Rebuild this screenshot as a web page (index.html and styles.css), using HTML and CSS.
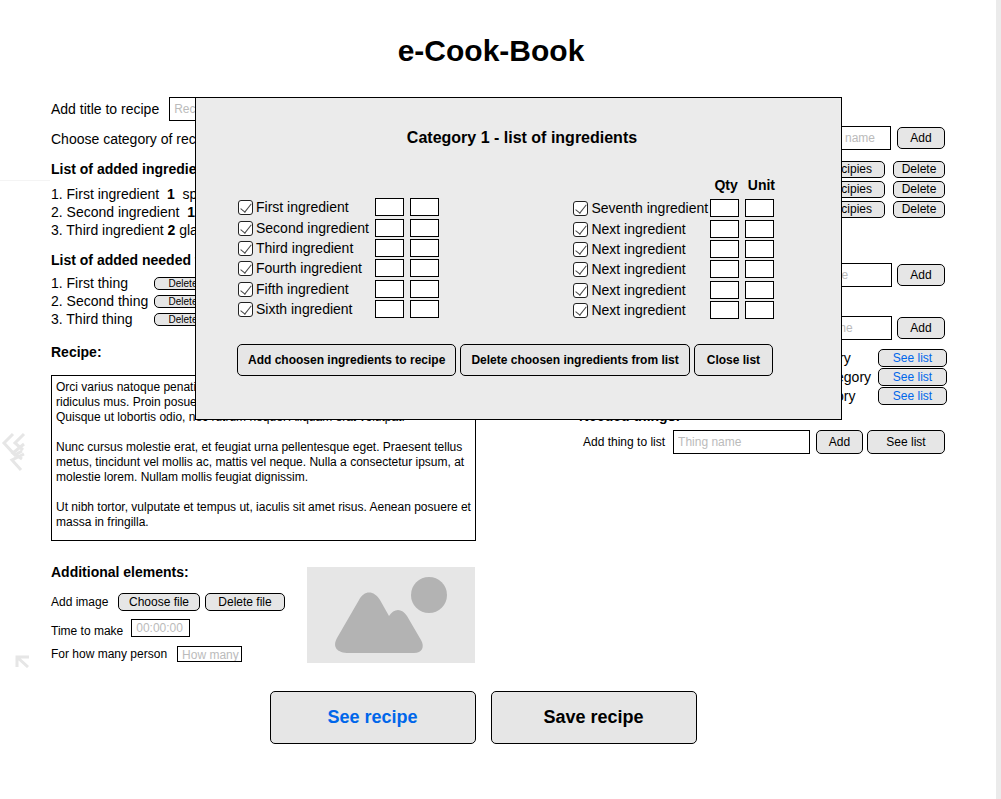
FILE: index.html
```html
<!DOCTYPE html>
<html lang="en">
<head>
<meta charset="utf-8">
<meta name="viewport" content="width=device-width, initial-scale=1">
<title>e-Cook-Book</title>
<link rel="stylesheet" href="styles.css">
</head>
<body>
<div class="page">
  <h1 class="brand">e-Cook-Book</h1>
  <main class="content">
    <div class="columns">
      <section class="recipe">
        <div class="title-row">
          <label for="recipe-title">Add title to recipe</label>
          <input class="field" id="recipe-title" type="text" placeholder="Recipe title">
        </div>
        <p class="category-row">Choose category of recipe</p>
        <h2 class="heading">List of added ingredients:</h2>
        <ul class="list">
          <li>1. First ingredient&nbsp; <b>1</b>&nbsp; spoon</li>
          <li>2. Second ingredient&nbsp; <b>1</b>&nbsp; cup</li>
          <li>3. Third ingredient <b>2</b> glass</li>
        </ul>
        <h2 class="heading heading-things">List of added needed things:</h2>
        <ul class="list list-things">
          <li><span class="thing">1. First thing</span><button class="btn btn-tiny" type="button">Delete</button></li>
          <li><span class="thing">2. Second thing</span><button class="btn btn-tiny" type="button">Delete</button></li>
          <li><span class="thing">3. Third thing</span><button class="btn btn-tiny" type="button">Delete</button></li>
        </ul>
        <h2 class="heading heading-recipe"><label for="recipe-text">Recipe:</label></h2>
        <textarea class="recipe-text" id="recipe-text" spellcheck="false">Orci varius natoque penatibus et magnis dis parturient montes, nascetur
ridiculus mus. Proin posuere mauris vitae lacus.
Quisque ut lobortis odio, nec rutrum neque. Aliquam erat volutpat.

Nunc cursus molestie erat, et feugiat urna pellentesque eget. Praesent tellus metus, tincidunt vel mollis ac, mattis vel neque. Nulla a consectetur ipsum, at molestie lorem. Nullam mollis feugiat dignissim.

Ut nibh tortor, vulputate et tempus ut, iaculis sit amet risus. Aenean posuere et massa in fringilla.</textarea>
        <div class="extras">
          <div class="extras-form">
            <h2 class="heading">Additional elements:</h2>
            <div class="extra extra-image">
              <span class="extra-label">Add image</span>
              <button class="btn btn-choose" type="button">Choose file</button>
              <button class="btn btn-remove" type="button">Delete file</button>
            </div>
            <div class="extra extra-time">
              <label for="time">Time to make</label>
              <input class="field field-time" id="time" type="text" placeholder="00:00:00">
            </div>
            <div class="extra extra-people">
              <label for="people">For how many person</label>
              <input class="field field-people" id="people" type="text" placeholder="How many">
            </div>
          </div>
          <svg class="photo" viewBox="0 0 168 96" role="img" aria-label="Recipe image">
            <rect width="168" height="96" fill="#e6e6e6"/>
            <circle cx="122" cy="28" r="18" fill="#b3b3b3"/>
            <path d="M52 33C57 23 67 23 73 33L82 49C87 41 95 41 100 49L114 73C118 80 115 86 107 86H42C30 86 25 80 30 71Z" fill="#b3b3b3"/>
          </svg>
        </div>
      </section>

      <section class="manage" aria-label="Categories and ingredients">
        <div class="add-row add-category">
          <input class="field" type="text" placeholder="Category name" aria-label="Category name">
          <button class="btn btn-add" type="button">Add</button>
        </div>
        <ul class="recipies">
          <li><button class="btn btn-see-recipies" type="button">See recipies</button><button class="btn btn-delete" type="button">Delete</button></li>
          <li><button class="btn btn-see-recipies" type="button">See recipies</button><button class="btn btn-delete" type="button">Delete</button></li>
          <li><button class="btn btn-see-recipies" type="button">See recipies</button><button class="btn btn-delete" type="button">Delete</button></li>
        </ul>
        <div class="add-row add-ingredient-category">
          <input class="field" type="text" placeholder="Ingredient category name" aria-label="Ingredient category name">
          <button class="btn btn-add" type="button">Add</button>
        </div>
        <div class="add-row add-ingredient">
          <input class="field" type="text" placeholder="Ingredient name" aria-label="Ingredient name">
          <button class="btn btn-add" type="button">Add</button>
        </div>
        <ul class="categories">
          <li><span class="category">First category</span><button class="btn btn-link" type="button">See list</button></li>
          <li><span class="category">Second category</span><button class="btn btn-link" type="button">See list</button></li>
          <li><span class="category">Third category</span><button class="btn btn-link" type="button">See list</button></li>
        </ul>
        <h2 class="heading heading-needed">Needed things:</h2>
        <div class="thing-row">
          <label for="thing-name">Add thing to list</label>
          <input class="field" id="thing-name" type="text" placeholder="Thing name">
          <button class="btn btn-thing-add" type="button">Add</button>
          <button class="btn btn-thing-list" type="button">See list</button>
        </div>
      </section>
    </div>
    <div class="actions">
      <button class="btn btn-big btn-blue" type="button">See recipe</button>
      <button class="btn btn-big" type="button">Save recipe</button>
    </div>
  </main>

  <div class="guide"></div>
  <svg class="marks" viewBox="0 0 32 44" aria-hidden="true">
    <g fill="none" stroke="#e6e6e6" stroke-width="3">
      <path d="M13 3L4 12L15 24L22 20"/>
      <path d="M24 3L15 12L23 19"/>
      <path d="M24 13L13 22L22 28"/>
      <path d="M24 23L12 29L21 39"/>
    </g>
  </svg>
  <svg class="corner" viewBox="0 0 14 14" aria-hidden="true">
    <path d="M2 13V3H14M2 3L13 13" fill="none" stroke="#e6e6e6" stroke-width="3"/>
  </svg>

  <section class="modal" role="dialog" aria-labelledby="modal-title">
    <h2 class="modal-title" id="modal-title">Category 1 - list of ingredients</h2>
    <div class="picker">
      <div class="group">
        <label class="item"><input class="check" type="checkbox" checked>First ingredient</label><input class="box" type="text" aria-label="Qty"><input class="box" type="text" aria-label="Unit">
        <label class="item"><input class="check" type="checkbox" checked>Second ingredient</label><input class="box" type="text" aria-label="Qty"><input class="box" type="text" aria-label="Unit">
        <label class="item"><input class="check" type="checkbox" checked>Third ingredient</label><input class="box" type="text" aria-label="Qty"><input class="box" type="text" aria-label="Unit">
        <label class="item"><input class="check" type="checkbox" checked>Fourth ingredient</label><input class="box" type="text" aria-label="Qty"><input class="box" type="text" aria-label="Unit">
        <label class="item"><input class="check" type="checkbox" checked>Fifth ingredient</label><input class="box" type="text" aria-label="Qty"><input class="box" type="text" aria-label="Unit">
        <label class="item"><input class="check" type="checkbox" checked>Sixth ingredient</label><input class="box" type="text" aria-label="Qty"><input class="box" type="text" aria-label="Unit">
      </div>
      <div class="side">
        <div class="units"><span>Qty</span><span>Unit</span></div>
        <div class="group">
          <label class="item"><input class="check" type="checkbox" checked>Seventh ingredient</label><input class="box" type="text" aria-label="Qty"><input class="box" type="text" aria-label="Unit">
          <label class="item"><input class="check" type="checkbox" checked>Next ingredient</label><input class="box" type="text" aria-label="Qty"><input class="box" type="text" aria-label="Unit">
          <label class="item"><input class="check" type="checkbox" checked>Next ingredient</label><input class="box" type="text" aria-label="Qty"><input class="box" type="text" aria-label="Unit">
          <label class="item"><input class="check" type="checkbox" checked>Next ingredient</label><input class="box" type="text" aria-label="Qty"><input class="box" type="text" aria-label="Unit">
          <label class="item"><input class="check" type="checkbox" checked>Next ingredient</label><input class="box" type="text" aria-label="Qty"><input class="box" type="text" aria-label="Unit">
          <label class="item"><input class="check" type="checkbox" checked>Next ingredient</label><input class="box" type="text" aria-label="Qty"><input class="box" type="text" aria-label="Unit">
        </div>
      </div>
    </div>
    <div class="modal-actions">
      <button class="btn btn-modal" type="button">Add choosen ingredients to recipe</button>
      <button class="btn btn-modal" type="button">Delete choosen ingredients from list</button>
      <button class="btn btn-modal btn-modal-close" type="button">Close list</button>
    </div>
  </section>
</div>
</body>
</html>
```

FILE: styles.css
```css
* {
  box-sizing: border-box;
}

body {
  margin: 0;
  background: #fff;
  color: #000;
  font: 14px/18px "Liberation Sans", Arial, sans-serif;
}

h1, h2, p, ul {
  margin: 0;
  padding: 0;
}

ul {
  list-style: none;
}

.page {
  position: relative;
  min-height: 100vh;
  padding-bottom: 55px;
  border-right: 5px solid #ebebeb;
}

.brand {
  padding: 33px 14px 28px 0;
  font-size: 30px;
  line-height: 36px;
  text-align: center;
}

.content {
  padding: 0 49px 0 51px;
}

.columns {
  display: flex;
  justify-content: space-between;
  gap: 24px;
}

.recipe {
  flex: 0 0 425px;
}

.manage {
  flex: 0 0 368px;
  padding-top: 29px;
}

.heading {
  font-size: 14px;
  line-height: 18px;
}

/* Controls */

.btn {
  display: flex;
  align-items: center;
  justify-content: center;
  flex: none;
  margin: 0;
  padding: 0;
  border: 1px solid #000;
  border-radius: 5px;
  background: #e6e6e6;
  color: #000;
  font: 12px/14px "Liberation Sans", Arial, sans-serif;
  white-space: nowrap;
}

.field {
  height: 24px;
  min-width: 0;
  margin: 0;
  padding: 0 4px;
  border: 1px solid #000;
  border-radius: 0;
  background: #fff;
  font: 12px/14px "Liberation Sans", Arial, sans-serif;
}

.field::placeholder {
  color: #bbb;
  opacity: 1;
}

/* Recipe column */

.title-row {
  display: flex;
  align-items: center;
  gap: 10px;
}

.title-row .field {
  flex: 1;
}

.category-row {
  margin: 9px 0 12px;
}

.list {
  margin-top: 7px;
}

.list li {
  display: flex;
  white-space: pre;
}

.heading-things {
  margin-top: 12px;
}

.list-things {
  margin-top: 5px;
}

.list-things li {
  align-items: center;
}

.thing {
  width: 103px;
}

.btn-tiny {
  width: 58px;
  height: 13px;
  padding-top: 2px;
  font-size: 10px;
  line-height: 10px;
}

.heading-recipe {
  margin-top: 15px;
}

.recipe-text {
  display: block;
  width: 100%;
  height: 166px;
  margin: 14px 0 0;
  padding: 4px 2px 3px 4px;
  overflow: hidden;
  border: 1px solid #000;
  border-radius: 0;
  background: #fff;
  color: #000;
  font: 12px/15px "Liberation Sans", Arial, sans-serif;
  resize: none;
}

.extras {
  display: flex;
  justify-content: space-between;
  align-items: flex-end;
  margin-top: 22px;
  padding-right: 1px;
  font-size: 12px;
}

.extra {
  display: flex;
  align-items: center;
}

.extra-image {
  gap: 5px;
  margin-top: 12px;
}

.extra-label {
  width: 62px;
}

.btn-choose {
  width: 82px;
  height: 18px;
}

.btn-remove {
  width: 80px;
  height: 18px;
}

.extra-time {
  gap: 8px;
  margin-top: 8px;
}

.field-time {
  width: 59px;
  height: 18px;
  margin-bottom: 6px;
}

.extra-people {
  gap: 10px;
  margin-top: 2px;
}

.field-people {
  width: 65px;
  height: 16px;
  padding: 1px 0 0 4px;
}

.photo {
  display: block;
  width: 168px;
  height: 96px;
}

/* Management column */

.add-row {
  display: flex;
  align-items: center;
  justify-content: flex-end;
  gap: 5px;
  padding-right: 2px;
}

.btn-add {
  width: 48px;
  height: 22px;
}

.add-category {
  gap: 6px;
}

.add-category .field {
  width: 103px;
}

.add-ingredient-category {
  margin-top: 45px;
}

.add-ingredient-category .field {
  width: 185px;
}

.add-ingredient {
  margin-top: 29px;
}

.add-ingredient .field {
  width: 131px;
}

.recipies {
  display: grid;
  gap: 3px;
  margin-top: 11px;
}

.recipies li {
  display: flex;
  justify-content: flex-end;
  gap: 8px;
  padding-right: 2px;
}

.recipies .btn {
  height: 17px;
  padding-bottom: 1px;
}

.btn-see-recipies {
  width: 92px;
}

.btn-delete {
  width: 52px;
}

.categories {
  display: grid;
  gap: 1px;
  margin-top: 9px;
}

.categories li {
  display: flex;
  justify-content: flex-end;
}

.category {
  width: 112px;
}

.btn-link {
  width: 69px;
  height: 18px;
  color: #0066ea;
}

.heading-needed {
  margin-top: 2px;
}

.thing-row {
  display: flex;
  align-items: center;
  margin-top: 5px;
  padding: 0 2px 0 4px;
  font-size: 12px;
}

.thing-row .field {
  flex: 1;
  margin: 0 6px 0 8px;
}

.btn-thing-add {
  width: 47px;
  height: 24px;
}

.btn-thing-list {
  width: 78px;
  height: 24px;
  margin-left: 4px;
}

/* Bottom actions */

.actions {
  display: flex;
  justify-content: center;
  gap: 15px;
  margin-top: 28px;
  padding-right: 32px;
}

.btn-big {
  width: 206px;
  height: 53px;
  padding-bottom: 2px;
  font-size: 18px;
  font-weight: bold;
  line-height: 20px;
}

.btn-blue {
  color: #0066ea;
}

/* Canvas marks in the page margin */

.guide {
  position: absolute;
  top: 180px;
  left: 0;
  width: 50px;
  height: 1px;
  background: #f4f4f4;
}

.marks {
  position: absolute;
  top: 431px;
  left: 0;
  width: 32px;
  height: 44px;
}

.corner {
  position: absolute;
  top: 654px;
  left: 15px;
  width: 14px;
  height: 14px;
}

/* Ingredient picker */

.modal {
  position: absolute;
  top: 97px;
  left: 195px;
  width: 647px;
  padding: 30px 41px 43px;
  border: 1px solid #000;
  background: #ebebeb;
}

.modal-title {
  padding-left: 7px;
  font-size: 16px;
  line-height: 20px;
  text-align: center;
}

.picker {
  display: flex;
  align-items: flex-end;
  justify-content: space-between;
  margin-top: 28px;
  padding: 0 25px 0 1px;
}

.group {
  display: grid;
  grid-template-columns: 137px 35px 29px;
  grid-template-rows: 21px 20px 20px 21px 20px 20px;
  align-items: start;
}

.picker > .group {
  padding-bottom: 1px;
}

.item {
  display: flex;
  align-items: center;
  gap: 3px;
  white-space: nowrap;
}

.check {
  display: grid;
  place-items: center;
  flex: none;
  width: 15px;
  height: 15px;
  margin: 0;
  border: 1px solid #222;
  border-radius: 3px;
  background: #fff;
  appearance: none;
}

.check:checked::before {
  width: 5px;
  height: 10px;
  margin-bottom: 3px;
  border: solid #444;
  border-width: 0 1px 1px 0;
  content: "";
  transform: rotate(38deg);
}

.box {
  width: 29px;
  height: 18px;
  margin: 0;
  padding: 0 2px;
  border: 1px solid #000;
  border-radius: 0;
  background: #fff;
  font: 12px/14px "Liberation Sans", Arial, sans-serif;
}

.units {
  display: flex;
  gap: 10px;
  margin-bottom: 5px;
  padding-left: 141px;
  font-weight: bold;
}

.modal-actions {
  display: flex;
  gap: 4px;
  margin-top: 23px;
}

.btn-modal {
  height: 32px;
  padding: 0 10px;
  font-weight: bold;
}

.btn-modal-close {
  padding: 0 12px;
}
```
